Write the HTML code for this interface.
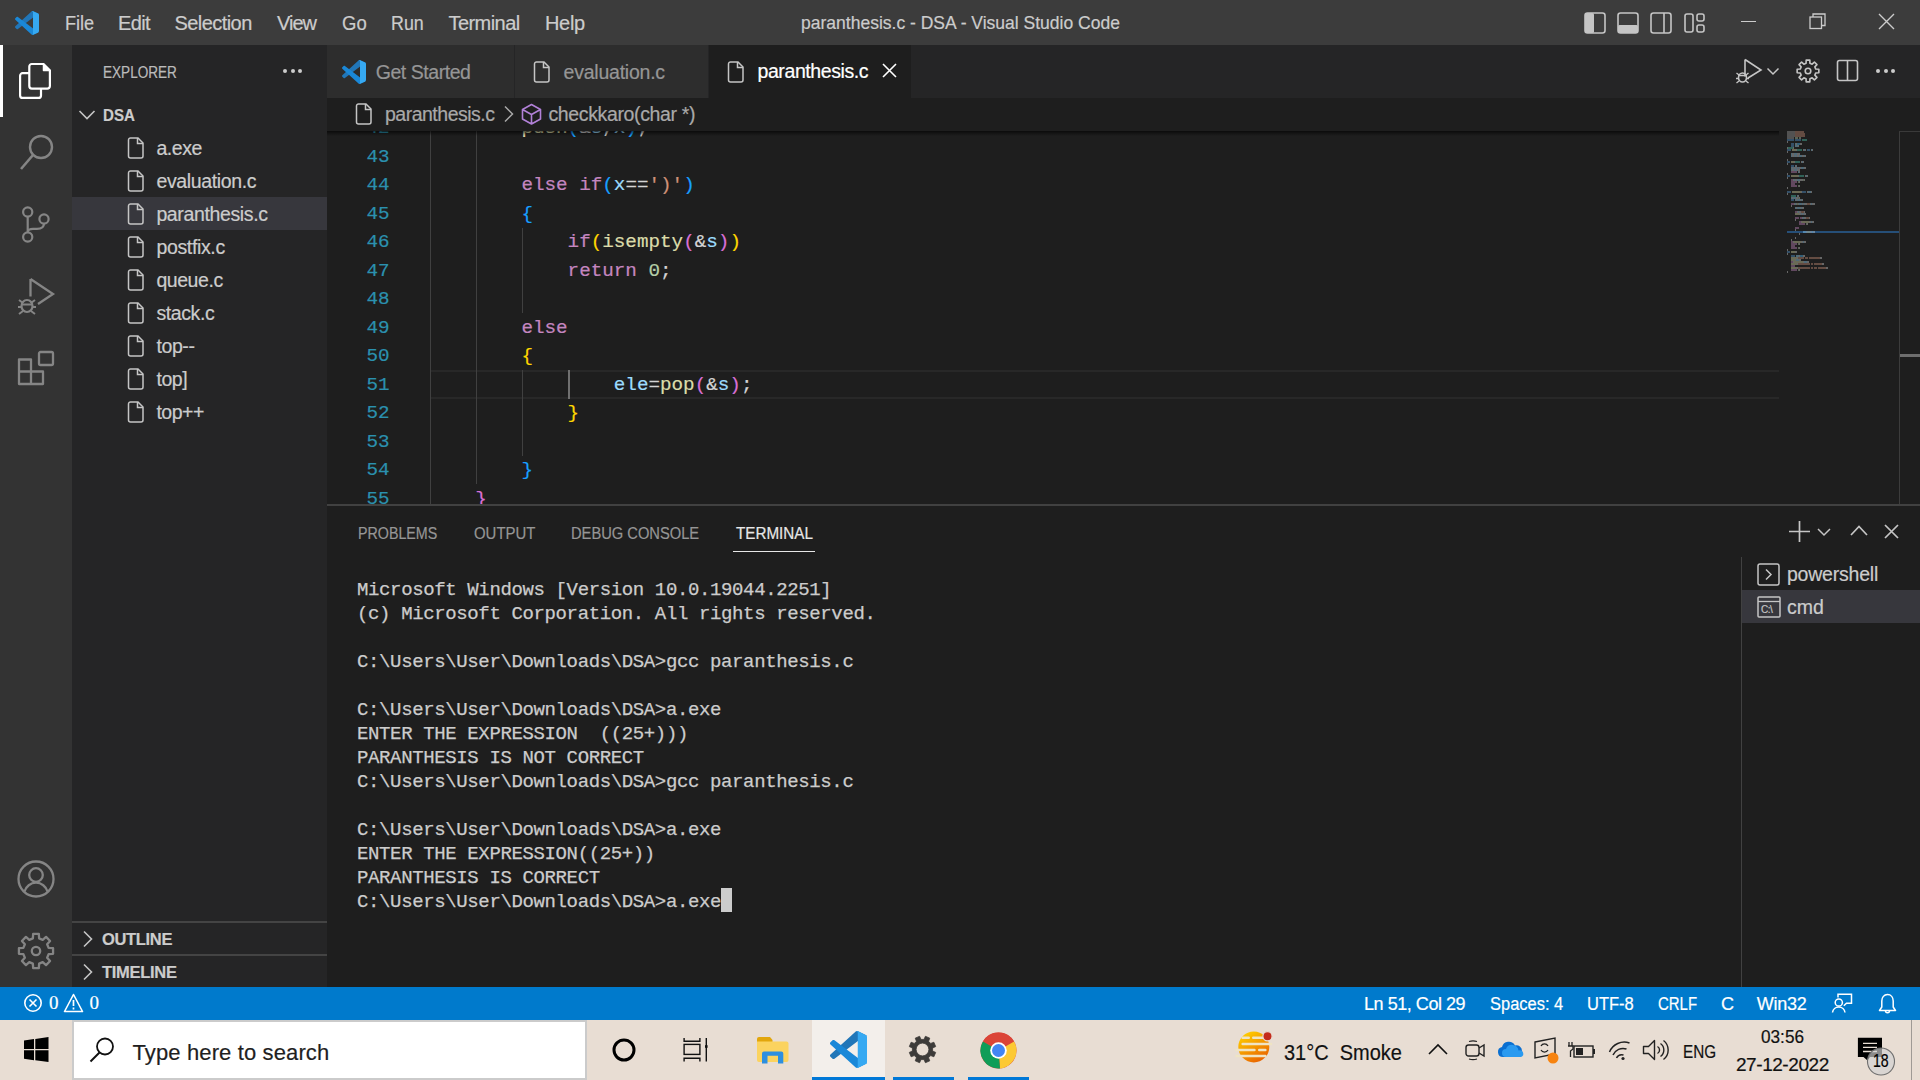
<!DOCTYPE html>
<html><head><meta charset="utf-8">
<style>
*{margin:0;padding:0;box-sizing:border-box}
html,body{width:1920px;height:1080px;overflow:hidden;background:#1e1e1e;font-family:"Liberation Sans",sans-serif}
.a{position:absolute}
.t{position:absolute;white-space:pre;line-height:1;-webkit-text-stroke-width:0.2px}
svg{position:absolute;overflow:visible}
</style></head><body>
<div class="a" style="left:0px;top:0px;width:1920px;height:45px;background:#3c3c3c;"></div>
<svg style="left:15px;top:11px;" width="24" height="24" viewBox="0 0 100 100"><path fill="#2176b8" d="M96.46 10.8L75.86.88C73.47-.27 70.62.21 68.75 2.08L1.3 63.58c-1.82 1.66-1.81 4.51.01 6.17l5.5 5.01c1.49 1.35 3.72 1.45 5.32.24L93.36 13.37C96.09 11.3 100 13.25 100 16.67v-.24c0-2.4-1.38-4.59-3.54-5.63z"/>
<path fill="#1a88d8" d="M96.46 89.2l-20.6 9.92c-2.39 1.15-5.24.67-7.11-1.2L1.3 36.42c-1.82-1.66-1.81-4.51.01-6.17l5.5-5.01c1.49-1.35 3.72-1.45 5.32-.24l81.23 61.62c2.73 2.07 6.64.12 6.64-3.3v.24c0 2.4-1.38 4.59-3.54 5.63z"/>
<path fill="#36a9f2" d="M75.86 99.13c-2.39 1.15-5.24.66-7.11-1.21 2.31 2.31 6.25.67 6.25-2.59V4.67c0-3.26-3.94-4.9-6.25-2.59 1.87-1.87 4.72-2.36 7.11-1.21l20.6 9.91c2.16 1.04 3.54 3.23 3.54 5.63v67.17c0 2.4-1.38 4.59-3.54 5.63l-20.6 9.92z"/></svg>
<div class="t" style="left:65.00px;top:13.07px;font-size:20px;color:#cccccc;font-family:'Liberation Sans',sans-serif;letter-spacing:0.000px;transform:scaleX(0.9062);transform-origin:0 0;">File</div>
<div class="t" style="left:118.00px;top:13.07px;font-size:20px;color:#cccccc;font-family:'Liberation Sans',sans-serif;letter-spacing:-0.667px;">Edit</div>
<div class="t" style="left:174.50px;top:13.07px;font-size:20px;color:#cccccc;font-family:'Liberation Sans',sans-serif;letter-spacing:-0.562px;">Selection</div>
<div class="t" style="left:277.00px;top:13.07px;font-size:20px;color:#cccccc;font-family:'Liberation Sans',sans-serif;letter-spacing:-1.000px;">View</div>
<div class="t" style="left:342.00px;top:13.07px;font-size:20px;color:#cccccc;font-family:'Liberation Sans',sans-serif;letter-spacing:0.000px;transform:scaleX(0.9259);transform-origin:0 0;">Go</div>
<div class="t" style="left:391.00px;top:13.07px;font-size:20px;color:#cccccc;font-family:'Liberation Sans',sans-serif;letter-spacing:0.000px;transform:scaleX(0.8919);transform-origin:0 0;">Run</div>
<div class="t" style="left:448.50px;top:13.07px;font-size:20px;color:#cccccc;font-family:'Liberation Sans',sans-serif;letter-spacing:-0.557px;">Terminal</div>
<div class="t" style="left:545.00px;top:13.07px;font-size:20px;color:#cccccc;font-family:'Liberation Sans',sans-serif;letter-spacing:-0.333px;">Help</div>
<div class="t" style="left:800.60px;top:12.91px;font-size:19px;color:#cccccc;font-family:'Liberation Sans',sans-serif;letter-spacing:0.000px;transform:scaleX(0.9217);transform-origin:0 0;">paranthesis.c - DSA - Visual Studio Code</div>
<svg style="left:1584px;top:12px;" width="22" height="22" viewBox="0 0 22 22"><rect x="1" y="1" width="20" height="20" rx="2.5" fill="none" stroke="#c5c5c5" stroke-width="1.6"/><rect x="1" y="1" width="9" height="20" rx="1.5" fill="#c5c5c5"/></svg>
<svg style="left:1617px;top:12px;" width="22" height="22" viewBox="0 0 22 22"><rect x="1" y="1" width="20" height="20" rx="2.5" fill="none" stroke="#c5c5c5" stroke-width="1.6"/><rect x="1" y="13" width="20" height="8" rx="1.5" fill="#c5c5c5"/></svg>
<svg style="left:1650px;top:12px;" width="22" height="22" viewBox="0 0 22 22"><rect x="1" y="1" width="20" height="20" rx="2.5" fill="none" stroke="#c5c5c5" stroke-width="1.6"/><line x1="14" y1="1" x2="14" y2="21" stroke="#c5c5c5" stroke-width="1.6"/></svg>
<svg style="left:1684px;top:13px;" width="21" height="21" viewBox="0 0 21 21"><rect x="1" y="1" width="8" height="18" rx="2" fill="none" stroke="#c5c5c5" stroke-width="1.6"/><rect x="13" y="1" width="7" height="7" rx="2" fill="none" stroke="#c5c5c5" stroke-width="1.6"/><rect x="13" y="12" width="7" height="7" rx="2" fill="none" stroke="#c5c5c5" stroke-width="1.6"/></svg>
<div class="a" style="left:1741px;top:21px;width:15px;height:1.2px;background:#cccccc;"></div>
<svg style="left:1809px;top:13px;" width="18" height="18" viewBox="0 0 18 18"><rect x="1" y="4" width="11.5" height="11.5" fill="none" stroke="#cccccc" stroke-width="1.3"/><path d="M4 4V1h12v11.5h-3.5" fill="none" stroke="#cccccc" stroke-width="1.3"/></svg>
<svg style="left:1878px;top:13px;" width="17" height="17" viewBox="0 0 17 17"><path d="M1 1L16 16M16 1L1 16" stroke="#cccccc" stroke-width="1.4"/></svg>
<div class="a" style="left:0px;top:45px;width:72px;height:942px;background:#333333;"></div>
<div class="a" style="left:0px;top:45px;width:3px;height:72px;background:#ffffff;"></div>
<svg style="left:18px;top:62px;" width="36" height="38" viewBox="0 0 36 38"><path d="M12 11.2H4.6A2.5 2.5 0 0 0 2.1 13.7V33.4A2.5 2.5 0 0 0 4.6 35.9H20.5A2.5 2.5 0 0 0 23 33.4V27" fill="none" stroke="#fff" stroke-width="2.2"/><path d="M13.8 2H25.5L31.9 8.4V24.1A2.5 2.5 0 0 1 29.4 26.6H13.8A2.5 2.5 0 0 1 11.3 24.1V4.5A2.5 2.5 0 0 1 13.8 2z" fill="none" stroke="#fff" stroke-width="2.2"/><path d="M25.5 2V8.4H31.9z" fill="#fff" stroke="#fff" stroke-width="1.5" stroke-linejoin="round"/></svg>
<svg style="left:18px;top:132px;" width="40" height="40" viewBox="0 0 40 40"><circle cx="23" cy="15" r="11" fill="none" stroke="#858585" stroke-width="2.4"/><line x1="15" y1="23" x2="3" y2="37" stroke="#858585" stroke-width="2.6"/></svg>
<svg style="left:18px;top:202px;" width="36" height="42" viewBox="0 0 36 42"><circle cx="9.7" cy="10" r="4.6" fill="none" stroke="#858585" stroke-width="2.2"/><circle cx="26" cy="17" r="4.6" fill="none" stroke="#858585" stroke-width="2.2"/><circle cx="9.7" cy="35" r="4.6" fill="none" stroke="#858585" stroke-width="2.2"/><path d="M9.7 14.6v15.8M26 21.6c0 4-3 5.3-7 5.3h-4c-3 0-5.3 1.2-5.3 3.5" fill="none" stroke="#858585" stroke-width="2.2"/></svg>
<svg style="left:16px;top:276px;" width="40" height="42" viewBox="0 0 40 42"><path d="M14.5 3v17.5M14.5 3L37 18 22 28" fill="none" stroke="#858585" stroke-width="2.3" stroke-linejoin="miter"/><ellipse cx="11" cy="30" rx="5.5" ry="6" fill="none" stroke="#858585" stroke-width="2.2"/><path d="M5.5 28.5h11M3 24l4 3M19 24l-4 3M2 31h3.5M16.5 31H20M3 38l4-3M19 38l-4-3" stroke="#858585" stroke-width="2"/></svg>
<svg style="left:16px;top:349px;" width="40" height="40" viewBox="0 0 40 40"><path d="M3 10.5h12v12h12v12.5H3z M3 22.5h12v12.5 M15 22.5V10.5" fill="none" stroke="#858585" stroke-width="2.3" stroke-linejoin="round"/><rect x="23" y="3" width="14" height="13" rx="1.5" fill="none" stroke="#858585" stroke-width="2.3"/></svg>
<svg style="left:17px;top:860px;" width="38" height="38" viewBox="0 0 38 38"><circle cx="19" cy="19" r="17.5" fill="none" stroke="#858585" stroke-width="2.3"/><circle cx="19" cy="15" r="6.8" fill="none" stroke="#858585" stroke-width="2.3"/><path d="M7.5 31.5c1.5-5 6-8.8 11.5-8.8s10 3.8 11.5 8.8" fill="none" stroke="#858585" stroke-width="2.3"/></svg>
<svg style="left:17px;top:932px;" width="38" height="38" viewBox="0 0 38 38"><path d="M31.62 15.87 L36.07 16.16 L36.07 21.84 L31.62 22.13 L30.14 25.71 L33.08 29.06 L29.06 33.08 L25.71 30.14 L22.13 31.62 L21.84 36.07 L16.16 36.07 L15.87 31.62 L12.29 30.14 L8.94 33.08 L4.92 29.06 L7.86 25.71 L6.38 22.13 L1.93 21.84 L1.93 16.16 L6.38 15.87 L7.86 12.29 L4.92 8.94 L8.94 4.92 L12.29 7.86 L15.87 6.38 L16.16 1.93 L21.84 1.93 L22.13 6.38 L25.71 7.86 L29.06 4.92 L33.08 8.94 L30.14 12.29Z" fill="none" stroke="#858585" stroke-width="2.3" stroke-linejoin="round"/><circle cx="19" cy="19" r="4.2" fill="none" stroke="#858585" stroke-width="2.3"/></svg>
<div class="a" style="left:72px;top:45px;width:255px;height:942px;background:#252526;"></div>
<div class="t" style="left:103.00px;top:64.03px;font-size:16.5px;color:#bbbbbb;font-family:'Liberation Sans',sans-serif;letter-spacing:0.000px;transform:scaleX(0.8222);transform-origin:0 0;">EXPLORER</div>
<div class="a" style="left:283.0px;top:69px;width:4px;height:4px;background:#cccccc;border-radius:2px"></div>
<div class="a" style="left:290.5px;top:69px;width:4px;height:4px;background:#cccccc;border-radius:2px"></div>
<div class="a" style="left:298.0px;top:69px;width:4px;height:4px;background:#cccccc;border-radius:2px"></div>
<svg style="left:78px;top:109px;" width="18" height="12" viewBox="0 0 18 12"><path d="M1.5 2l7.5 7.5L16.5 2" fill="none" stroke="#c5c5c5" stroke-width="1.6"/></svg>
<div class="t" style="left:103.00px;top:106.63px;font-size:16.5px;color:#cccccc;font-family:'Liberation Sans',sans-serif;font-weight:700;letter-spacing:0.000px;transform:scaleX(0.9143);transform-origin:0 0;">DSA</div>
<div class="a" style="left:72px;top:197px;width:255px;height:33px;background:#37373d;"></div>
<svg style="left:127px;top:137px;" width="18" height="22" viewBox="0 0 18 22"><path d="M1.5 3a2 2 0 0 1 2-2h7.5l5 5v13a2 2 0 0 1-2 2h-10.5a2 2 0 0 1-2-2z" fill="none" stroke="#c5c5c5" stroke-width="1.5"/><path d="M10.5 1v5.5h5.5" fill="none" stroke="#c5c5c5" stroke-width="1.5"/></svg>
<div class="t" style="left:156.40px;top:139.49px;font-size:19.5px;color:#cccccc;font-family:'Liberation Sans',sans-serif;letter-spacing:-0.456px;">a.exe</div>
<svg style="left:127px;top:170px;" width="18" height="22" viewBox="0 0 18 22"><path d="M1.5 3a2 2 0 0 1 2-2h7.5l5 5v13a2 2 0 0 1-2 2h-10.5a2 2 0 0 1-2-2z" fill="none" stroke="#c5c5c5" stroke-width="1.5"/><path d="M10.5 1v5.5h5.5" fill="none" stroke="#c5c5c5" stroke-width="1.5"/></svg>
<div class="t" style="left:156.40px;top:172.49px;font-size:19.5px;color:#cccccc;font-family:'Liberation Sans',sans-serif;letter-spacing:-0.359px;">evaluation.c</div>
<svg style="left:127px;top:203px;" width="18" height="22" viewBox="0 0 18 22"><path d="M1.5 3a2 2 0 0 1 2-2h7.5l5 5v13a2 2 0 0 1-2 2h-10.5a2 2 0 0 1-2-2z" fill="none" stroke="#c5c5c5" stroke-width="1.5"/><path d="M10.5 1v5.5h5.5" fill="none" stroke="#c5c5c5" stroke-width="1.5"/></svg>
<div class="t" style="left:156.40px;top:205.49px;font-size:19.5px;color:#cccccc;font-family:'Liberation Sans',sans-serif;letter-spacing:-0.367px;">paranthesis.c</div>
<svg style="left:127px;top:236px;" width="18" height="22" viewBox="0 0 18 22"><path d="M1.5 3a2 2 0 0 1 2-2h7.5l5 5v13a2 2 0 0 1-2 2h-10.5a2 2 0 0 1-2-2z" fill="none" stroke="#c5c5c5" stroke-width="1.5"/><path d="M10.5 1v5.5h5.5" fill="none" stroke="#c5c5c5" stroke-width="1.5"/></svg>
<div class="t" style="left:156.40px;top:238.49px;font-size:19.5px;color:#cccccc;font-family:'Liberation Sans',sans-serif;letter-spacing:-0.342px;">postfix.c</div>
<svg style="left:127px;top:269px;" width="18" height="22" viewBox="0 0 18 22"><path d="M1.5 3a2 2 0 0 1 2-2h7.5l5 5v13a2 2 0 0 1-2 2h-10.5a2 2 0 0 1-2-2z" fill="none" stroke="#c5c5c5" stroke-width="1.5"/><path d="M10.5 1v5.5h5.5" fill="none" stroke="#c5c5c5" stroke-width="1.5"/></svg>
<div class="t" style="left:156.40px;top:271.49px;font-size:19.5px;color:#cccccc;font-family:'Liberation Sans',sans-serif;letter-spacing:-0.443px;">queue.c</div>
<svg style="left:127px;top:302px;" width="18" height="22" viewBox="0 0 18 22"><path d="M1.5 3a2 2 0 0 1 2-2h7.5l5 5v13a2 2 0 0 1-2 2h-10.5a2 2 0 0 1-2-2z" fill="none" stroke="#c5c5c5" stroke-width="1.5"/><path d="M10.5 1v5.5h5.5" fill="none" stroke="#c5c5c5" stroke-width="1.5"/></svg>
<div class="t" style="left:156.40px;top:304.49px;font-size:19.5px;color:#cccccc;font-family:'Liberation Sans',sans-serif;letter-spacing:-0.386px;">stack.c</div>
<svg style="left:127px;top:335px;" width="18" height="22" viewBox="0 0 18 22"><path d="M1.5 3a2 2 0 0 1 2-2h7.5l5 5v13a2 2 0 0 1-2 2h-10.5a2 2 0 0 1-2-2z" fill="none" stroke="#c5c5c5" stroke-width="1.5"/><path d="M10.5 1v5.5h5.5" fill="none" stroke="#c5c5c5" stroke-width="1.5"/></svg>
<div class="t" style="left:156.40px;top:337.49px;font-size:19.5px;color:#cccccc;font-family:'Liberation Sans',sans-serif;letter-spacing:-0.380px;">top--</div>
<svg style="left:127px;top:368px;" width="18" height="22" viewBox="0 0 18 22"><path d="M1.5 3a2 2 0 0 1 2-2h7.5l5 5v13a2 2 0 0 1-2 2h-10.5a2 2 0 0 1-2-2z" fill="none" stroke="#c5c5c5" stroke-width="1.5"/><path d="M10.5 1v5.5h5.5" fill="none" stroke="#c5c5c5" stroke-width="1.5"/></svg>
<div class="t" style="left:156.40px;top:370.49px;font-size:19.5px;color:#cccccc;font-family:'Liberation Sans',sans-serif;letter-spacing:-0.418px;">top]</div>
<svg style="left:127px;top:401px;" width="18" height="22" viewBox="0 0 18 22"><path d="M1.5 3a2 2 0 0 1 2-2h7.5l5 5v13a2 2 0 0 1-2 2h-10.5a2 2 0 0 1-2-2z" fill="none" stroke="#c5c5c5" stroke-width="1.5"/><path d="M10.5 1v5.5h5.5" fill="none" stroke="#c5c5c5" stroke-width="1.5"/></svg>
<div class="t" style="left:156.40px;top:403.49px;font-size:19.5px;color:#cccccc;font-family:'Liberation Sans',sans-serif;letter-spacing:-0.475px;">top++</div>
<div class="a" style="left:72px;top:921px;width:255px;height:1.5px;background:#444444;"></div>
<div class="a" style="left:72px;top:954px;width:255px;height:1.5px;background:#444444;"></div>
<svg style="left:82px;top:930px;" width="12" height="18" viewBox="0 0 12 18"><path d="M2 1.5l7.5 7.5L2 16.5" fill="none" stroke="#c5c5c5" stroke-width="1.6"/></svg>
<div class="t" style="left:102.00px;top:931.03px;font-size:16.5px;color:#cccccc;font-family:'Liberation Sans',sans-serif;font-weight:700;letter-spacing:-0.333px;">OUTLINE</div>
<svg style="left:82px;top:963px;" width="12" height="18" viewBox="0 0 12 18"><path d="M2 1.5l7.5 7.5L2 16.5" fill="none" stroke="#c5c5c5" stroke-width="1.6"/></svg>
<div class="t" style="left:102.00px;top:964.03px;font-size:16.5px;color:#cccccc;font-family:'Liberation Sans',sans-serif;font-weight:700;letter-spacing:-0.286px;">TIMELINE</div>
<div class="a" style="left:327px;top:45px;width:1593px;height:53px;background:#252526;"></div>
<div class="a" style="left:327px;top:45px;width:187px;height:53px;background:#2d2d2d;"></div>
<div class="a" style="left:515px;top:45px;width:193px;height:53px;background:#2d2d2d;"></div>
<div class="a" style="left:709px;top:45px;width:202px;height:53px;background:#1e1e1e;"></div>
<svg style="left:342px;top:60px;" width="24" height="24" viewBox="0 0 100 100"><path fill="#2176b8" d="M96.46 10.8L75.86.88C73.47-.27 70.62.21 68.75 2.08L1.3 63.58c-1.82 1.66-1.81 4.51.01 6.17l5.5 5.01c1.49 1.35 3.72 1.45 5.32.24L93.36 13.37C96.09 11.3 100 13.25 100 16.67v-.24c0-2.4-1.38-4.59-3.54-5.63z"/>
<path fill="#1a88d8" d="M96.46 89.2l-20.6 9.92c-2.39 1.15-5.24.67-7.11-1.2L1.3 36.42c-1.82-1.66-1.81-4.51.01-6.17l5.5-5.01c1.49-1.35 3.72-1.45 5.32-.24l81.23 61.62c2.73 2.07 6.64.12 6.64-3.3v.24c0 2.4-1.38 4.59-3.54 5.63z"/>
<path fill="#36a9f2" d="M75.86 99.13c-2.39 1.15-5.24.66-7.11-1.21 2.31 2.31 6.25.67 6.25-2.59V4.67c0-3.26-3.94-4.9-6.25-2.59 1.87-1.87 4.72-2.36 7.11-1.21l20.6 9.91c2.16 1.04 3.54 3.23 3.54 5.63v67.17c0 2.4-1.38 4.59-3.54 5.63l-20.6 9.92z"/></svg>
<div class="t" style="left:375.75px;top:62.79px;font-size:19.5px;color:#969696;font-family:'Liberation Sans',sans-serif;letter-spacing:-0.455px;">Get Started</div>
<svg style="left:533px;top:61px;" width="18" height="22" viewBox="0 0 18 22"><path d="M1.5 3a2 2 0 0 1 2-2h7.5l5 5v13a2 2 0 0 1-2 2h-10.5a2 2 0 0 1-2-2z" fill="none" stroke="#c5c5c5" stroke-width="1.5"/><path d="M10.5 1v5.5h5.5" fill="none" stroke="#c5c5c5" stroke-width="1.5"/></svg>
<div class="t" style="left:563.60px;top:62.79px;font-size:19.5px;color:#969696;font-family:'Liberation Sans',sans-serif;letter-spacing:-0.236px;">evaluation.c</div>
<svg style="left:727px;top:61px;" width="18" height="22" viewBox="0 0 18 22"><path d="M1.5 3a2 2 0 0 1 2-2h7.5l5 5v13a2 2 0 0 1-2 2h-10.5a2 2 0 0 1-2-2z" fill="none" stroke="#c5c5c5" stroke-width="1.5"/><path d="M10.5 1v5.5h5.5" fill="none" stroke="#c5c5c5" stroke-width="1.5"/></svg>
<div class="t" style="left:757.50px;top:62.49px;font-size:19.5px;color:#ffffff;font-family:'Liberation Sans',sans-serif;letter-spacing:-0.408px;">paranthesis.c</div>
<svg style="left:882px;top:63px;" width="15" height="15" viewBox="0 0 15 15"><path d="M1 1L14 14M14 1L1 14" stroke="#ffffff" stroke-width="1.6"/></svg>
<svg style="left:1735px;top:58px;" width="48" height="28" viewBox="0 0 48 28"><path d="M10 1.5v17M10 1.5L26 12 13 20" fill="none" stroke="#c5c5c5" stroke-width="1.6"/><ellipse cx="7.5" cy="19.5" rx="4" ry="4.5" fill="none" stroke="#c5c5c5" stroke-width="1.6"/><path d="M3.5 17.5h8M1.5 15l2.5 2M13.5 15l-2.5 2M1 20.5h2.5M11.5 20.5H14M1.5 25l2.5-2M13.5 25l-2.5-2" stroke="#c5c5c5" stroke-width="1.4"/><path d="M32.5 10.5l5.5 5.5 5.5-5.5" fill="none" stroke="#c5c5c5" stroke-width="1.5"/></svg>
<svg style="left:1796px;top:59px;" width="24" height="24" viewBox="0 0 24 24"><path d="M19.76 10.07 L22.85 10.19 L22.85 13.81 L19.76 13.93 L18.85 16.13 L20.95 18.40 L18.40 20.95 L16.13 18.85 L13.93 19.76 L13.81 22.85 L10.19 22.85 L10.07 19.76 L7.87 18.85 L5.60 20.95 L3.05 18.40 L5.15 16.13 L4.24 13.93 L1.15 13.81 L1.15 10.19 L4.24 10.07 L5.15 7.87 L3.05 5.60 L5.60 3.05 L7.87 5.15 L10.07 4.24 L10.19 1.15 L13.81 1.15 L13.93 4.24 L16.13 5.15 L18.40 3.05 L20.95 5.60 L18.85 7.87Z" fill="none" stroke="#c5c5c5" stroke-width="1.6" stroke-linejoin="round"/><circle cx="12" cy="12" r="2.8" fill="none" stroke="#c5c5c5" stroke-width="1.6"/></svg>
<svg style="left:1836px;top:59px;" width="23" height="23" viewBox="0 0 23 23"><rect x="1.5" y="1.5" width="20" height="20" rx="2" fill="none" stroke="#c5c5c5" stroke-width="1.6"/><line x1="11.5" y1="1.5" x2="11.5" y2="21.5" stroke="#c5c5c5" stroke-width="1.6"/></svg>
<div class="a" style="left:1876.0px;top:69px;width:4px;height:4px;background:#cccccc;border-radius:2px"></div>
<div class="a" style="left:1883.5px;top:69px;width:4px;height:4px;background:#cccccc;border-radius:2px"></div>
<div class="a" style="left:1891.0px;top:69px;width:4px;height:4px;background:#cccccc;border-radius:2px"></div>
<div class="a" style="left:327px;top:98px;width:1593px;height:33px;background:#1e1e1e;"></div>
<svg style="left:355px;top:103px;" width="18" height="22" viewBox="0 0 18 22"><path d="M1.5 3a2 2 0 0 1 2-2h7.5l5 5v13a2 2 0 0 1-2 2h-10.5a2 2 0 0 1-2-2z" fill="none" stroke="#c5c5c5" stroke-width="1.5"/><path d="M10.5 1v5.5h5.5" fill="none" stroke="#c5c5c5" stroke-width="1.5"/></svg>
<div class="t" style="left:385.00px;top:104.69px;font-size:19.5px;color:#a9a9a9;font-family:'Liberation Sans',sans-serif;letter-spacing:-0.500px;">paranthesis.c</div>
<svg style="left:503px;top:105px;" width="12" height="18" viewBox="0 0 12 18"><path d="M2 1.5l7.5 7.5L2 16.5" fill="none" stroke="#a9a9a9" stroke-width="1.5"/></svg>
<svg style="left:521px;top:103px;" width="21" height="22" viewBox="0 0 21 22"><path d="M10.5 1.5L19.5 6.5v9.5l-9 5-9-5V6.5z M1.5 6.5l9 5 9-5 M10.5 11.5v9.5" fill="none" stroke="#b180d7" stroke-width="1.6" stroke-linejoin="round"/></svg>
<div class="t" style="left:548.40px;top:104.69px;font-size:19.5px;color:#a9a9a9;font-family:'Liberation Sans',sans-serif;letter-spacing:-0.356px;">checkkaro(char *)</div>
<div class="a" style="left:327px;top:131px;width:1593px;height:373px;overflow:hidden;background:#1e1e1e">
<div class="a" style="left:103px;top:239.0px;width:1349px;height:28.5px;border-top:2px solid #282828;border-bottom:2px solid #282828"></div>
<div class="a" style="left:102.50px;top:-46.00px;width:1.5px;height:456.00px;background:#404040"></div>
<div class="a" style="left:148.70px;top:-46.00px;width:1.5px;height:399.00px;background:#404040"></div>
<div class="a" style="left:194.90px;top:96.50px;width:1.5px;height:85.50px;background:#404040"></div>
<div class="a" style="left:194.90px;top:239.00px;width:1.5px;height:85.50px;background:#404040"></div>
<div class="a" style="left:241.10px;top:239.00px;width:1.5px;height:28.50px;background:#707070"></div>
<div class="t" style="left:39.40px;top:-11.56px;font-family:'Liberation Mono',monospace;font-size:19.25px;color:#2b91af">42</div>
<div class="t" style="left:194.40px;top:-11.56px;font-family:'Liberation Mono',monospace;font-size:19.25px"><span style="color:#DCDCAA">push</span><span style="color:#179FFF">(</span><span style="color:#D4D4D4">&amp;</span><span style="color:#9CDCFE">s</span><span style="color:#D4D4D4">,</span><span style="color:#9CDCFE">x</span><span style="color:#179FFF">)</span><span style="color:#D4D4D4">;</span></div>
<div class="t" style="left:39.40px;top:16.94px;font-family:'Liberation Mono',monospace;font-size:19.25px;color:#2b91af">43</div>
<div class="t" style="left:39.40px;top:45.44px;font-family:'Liberation Mono',monospace;font-size:19.25px;color:#2b91af">44</div>
<div class="t" style="left:194.40px;top:45.44px;font-family:'Liberation Mono',monospace;font-size:19.25px"><span style="color:#C586C0">else</span><span style="color:#D4D4D4"> </span><span style="color:#C586C0">if</span><span style="color:#179FFF">(</span><span style="color:#9CDCFE">x</span><span style="color:#D4D4D4">==</span><span style="color:#CE9178">')'</span><span style="color:#179FFF">)</span></div>
<div class="t" style="left:39.40px;top:73.94px;font-family:'Liberation Mono',monospace;font-size:19.25px;color:#2b91af">45</div>
<div class="t" style="left:194.40px;top:73.94px;font-family:'Liberation Mono',monospace;font-size:19.25px"><span style="color:#179FFF">{</span></div>
<div class="t" style="left:39.40px;top:102.44px;font-family:'Liberation Mono',monospace;font-size:19.25px;color:#2b91af">46</div>
<div class="t" style="left:240.60px;top:102.44px;font-family:'Liberation Mono',monospace;font-size:19.25px"><span style="color:#C586C0">if</span><span style="color:#FFD700">(</span><span style="color:#DCDCAA">isempty</span><span style="color:#DA70D6">(</span><span style="color:#D4D4D4">&amp;</span><span style="color:#9CDCFE">s</span><span style="color:#DA70D6">)</span><span style="color:#FFD700">)</span></div>
<div class="t" style="left:39.40px;top:130.94px;font-family:'Liberation Mono',monospace;font-size:19.25px;color:#2b91af">47</div>
<div class="t" style="left:240.60px;top:130.94px;font-family:'Liberation Mono',monospace;font-size:19.25px"><span style="color:#C586C0">return</span><span style="color:#D4D4D4"> </span><span style="color:#B5CEA8">0</span><span style="color:#D4D4D4">;</span></div>
<div class="t" style="left:39.40px;top:159.44px;font-family:'Liberation Mono',monospace;font-size:19.25px;color:#2b91af">48</div>
<div class="t" style="left:39.40px;top:187.94px;font-family:'Liberation Mono',monospace;font-size:19.25px;color:#2b91af">49</div>
<div class="t" style="left:194.40px;top:187.94px;font-family:'Liberation Mono',monospace;font-size:19.25px"><span style="color:#C586C0">else</span></div>
<div class="t" style="left:39.40px;top:216.44px;font-family:'Liberation Mono',monospace;font-size:19.25px;color:#2b91af">50</div>
<div class="t" style="left:194.40px;top:216.44px;font-family:'Liberation Mono',monospace;font-size:19.25px"><span style="color:#FFD700">{</span></div>
<div class="t" style="left:39.40px;top:244.94px;font-family:'Liberation Mono',monospace;font-size:19.25px;color:#2b91af">51</div>
<div class="t" style="left:286.80px;top:244.94px;font-family:'Liberation Mono',monospace;font-size:19.25px"><span style="color:#9CDCFE">ele</span><span style="color:#D4D4D4">=</span><span style="color:#DCDCAA">pop</span><span style="color:#DA70D6">(</span><span style="color:#D4D4D4">&amp;</span><span style="color:#9CDCFE">s</span><span style="color:#DA70D6">)</span><span style="color:#D4D4D4">;</span></div>
<div class="t" style="left:39.40px;top:273.44px;font-family:'Liberation Mono',monospace;font-size:19.25px;color:#2b91af">52</div>
<div class="t" style="left:240.60px;top:273.44px;font-family:'Liberation Mono',monospace;font-size:19.25px"><span style="color:#FFD700">}</span></div>
<div class="t" style="left:39.40px;top:301.94px;font-family:'Liberation Mono',monospace;font-size:19.25px;color:#2b91af">53</div>
<div class="t" style="left:39.40px;top:330.44px;font-family:'Liberation Mono',monospace;font-size:19.25px;color:#2b91af">54</div>
<div class="t" style="left:194.40px;top:330.44px;font-family:'Liberation Mono',monospace;font-size:19.25px"><span style="color:#179FFF">}</span></div>
<div class="t" style="left:39.40px;top:358.94px;font-family:'Liberation Mono',monospace;font-size:19.25px;color:#2b91af">55</div>
<div class="t" style="left:148.20px;top:358.94px;font-family:'Liberation Mono',monospace;font-size:19.25px"><span style="color:#DA70D6">}</span></div>
</div>
<div class="a" style="left:327px;top:131px;width:1452px;height:5px;background:linear-gradient(#000000a0,#00000000)"></div>
<div class="a" style="left:1787px;top:231px;width:112px;height:2.2px;background:#264f78;"></div>
<div class="a" style="left:1787px;top:131px;width:8px;height:1.5px;background:#a0a0a0;opacity:0.4"></div>
<div class="a" style="left:1795px;top:131px;width:9px;height:1.5px;background:#CE9178;opacity:0.4"></div>
<div class="a" style="left:1787px;top:133px;width:8px;height:1.5px;background:#a0a0a0;opacity:0.4"></div>
<div class="a" style="left:1795px;top:133px;width:10px;height:1.5px;background:#CE9178;opacity:0.4"></div>
<div class="a" style="left:1787px;top:135px;width:8px;height:1.5px;background:#a0a0a0;opacity:0.4"></div>
<div class="a" style="left:1795px;top:135px;width:10px;height:1.5px;background:#CE9178;opacity:0.4"></div>
<div class="a" style="left:1787px;top:137px;width:7px;height:1.5px;background:#a0a0a0;opacity:0.4"></div>
<div class="a" style="left:1795px;top:137px;width:3px;height:1.5px;background:#B5CEA8;opacity:0.4"></div>
<div class="a" style="left:1799px;top:137px;width:2px;height:1.5px;background:#B5CEA8;opacity:0.4"></div>
<div class="a" style="left:1787px;top:139px;width:7px;height:1.5px;background:#569CD6;opacity:0.4"></div>
<div class="a" style="left:1795px;top:139px;width:6px;height:1.5px;background:#569CD6;opacity:0.4"></div>
<div class="a" style="left:1802px;top:139px;width:5px;height:1.5px;background:#4EC9B0;opacity:0.4"></div>
<div class="a" style="left:1787px;top:141px;width:1px;height:1.5px;background:#D4D4D4;opacity:0.4"></div>
<div class="a" style="left:1791px;top:143px;width:3px;height:1.5px;background:#569CD6;opacity:0.4"></div>
<div class="a" style="left:1795px;top:143px;width:1px;height:1.5px;background:#9CDCFE;opacity:0.4"></div>
<div class="a" style="left:1796px;top:143px;width:1px;height:1.5px;background:#D4D4D4;opacity:0.4"></div>
<div class="a" style="left:1797px;top:143px;width:3px;height:1.5px;background:#4FC1FF;opacity:0.4"></div>
<div class="a" style="left:1800px;top:143px;width:1px;height:1.5px;background:#D4D4D4;opacity:0.4"></div>
<div class="a" style="left:1801px;top:143px;width:1px;height:1.5px;background:#D4D4D4;opacity:0.4"></div>
<div class="a" style="left:1791px;top:145px;width:3px;height:1.5px;background:#569CD6;opacity:0.4"></div>
<div class="a" style="left:1795px;top:145px;width:3px;height:1.5px;background:#9CDCFE;opacity:0.4"></div>
<div class="a" style="left:1798px;top:145px;width:1px;height:1.5px;background:#D4D4D4;opacity:0.4"></div>
<div class="a" style="left:1787px;top:147px;width:1px;height:1.5px;background:#D4D4D4;opacity:0.4"></div>
<div class="a" style="left:1788px;top:147px;width:5px;height:1.5px;background:#4EC9B0;opacity:0.4"></div>
<div class="a" style="left:1793px;top:147px;width:1px;height:1.5px;background:#D4D4D4;opacity:0.4"></div>
<div class="a" style="left:1787px;top:149px;width:4px;height:1.5px;background:#569CD6;opacity:0.4"></div>
<div class="a" style="left:1792px;top:149px;width:4px;height:1.5px;background:#DCDCAA;opacity:0.4"></div>
<div class="a" style="left:1796px;top:149px;width:1px;height:1.5px;background:#D4D4D4;opacity:0.4"></div>
<div class="a" style="left:1797px;top:149px;width:5px;height:1.5px;background:#4EC9B0;opacity:0.4"></div>
<div class="a" style="left:1803px;top:149px;width:1px;height:1.5px;background:#D4D4D4;opacity:0.4"></div>
<div class="a" style="left:1804px;top:149px;width:1px;height:1.5px;background:#9CDCFE;opacity:0.4"></div>
<div class="a" style="left:1805px;top:149px;width:1px;height:1.5px;background:#D4D4D4;opacity:0.4"></div>
<div class="a" style="left:1807px;top:149px;width:3px;height:1.5px;background:#569CD6;opacity:0.4"></div>
<div class="a" style="left:1811px;top:149px;width:1px;height:1.5px;background:#9CDCFE;opacity:0.4"></div>
<div class="a" style="left:1812px;top:149px;width:1px;height:1.5px;background:#D4D4D4;opacity:0.4"></div>
<div class="a" style="left:1787px;top:151px;width:1px;height:1.5px;background:#D4D4D4;opacity:0.4"></div>
<div class="a" style="left:1791px;top:153px;width:1px;height:1.5px;background:#9CDCFE;opacity:0.4"></div>
<div class="a" style="left:1792px;top:153px;width:1px;height:1.5px;background:#D4D4D4;opacity:0.4"></div>
<div class="a" style="left:1793px;top:153px;width:1px;height:1.5px;background:#D4D4D4;opacity:0.4"></div>
<div class="a" style="left:1794px;top:153px;width:3px;height:1.5px;background:#9CDCFE;opacity:0.4"></div>
<div class="a" style="left:1797px;top:153px;width:1px;height:1.5px;background:#D4D4D4;opacity:0.4"></div>
<div class="a" style="left:1798px;top:153px;width:1px;height:1.5px;background:#D4D4D4;opacity:0.4"></div>
<div class="a" style="left:1799px;top:153px;width:1px;height:1.5px;background:#D4D4D4;opacity:0.4"></div>
<div class="a" style="left:1791px;top:155px;width:1px;height:1.5px;background:#9CDCFE;opacity:0.4"></div>
<div class="a" style="left:1792px;top:155px;width:1px;height:1.5px;background:#D4D4D4;opacity:0.4"></div>
<div class="a" style="left:1793px;top:155px;width:1px;height:1.5px;background:#D4D4D4;opacity:0.4"></div>
<div class="a" style="left:1794px;top:155px;width:1px;height:1.5px;background:#9CDCFE;opacity:0.4"></div>
<div class="a" style="left:1795px;top:155px;width:1px;height:1.5px;background:#D4D4D4;opacity:0.4"></div>
<div class="a" style="left:1796px;top:155px;width:1px;height:1.5px;background:#9CDCFE;opacity:0.4"></div>
<div class="a" style="left:1797px;top:155px;width:1px;height:1.5px;background:#D4D4D4;opacity:0.4"></div>
<div class="a" style="left:1798px;top:155px;width:1px;height:1.5px;background:#D4D4D4;opacity:0.4"></div>
<div class="a" style="left:1799px;top:155px;width:3px;height:1.5px;background:#9CDCFE;opacity:0.4"></div>
<div class="a" style="left:1802px;top:155px;width:1px;height:1.5px;background:#D4D4D4;opacity:0.4"></div>
<div class="a" style="left:1803px;top:155px;width:1px;height:1.5px;background:#D4D4D4;opacity:0.4"></div>
<div class="a" style="left:1804px;top:155px;width:1px;height:1.5px;background:#9CDCFE;opacity:0.4"></div>
<div class="a" style="left:1805px;top:155px;width:1px;height:1.5px;background:#D4D4D4;opacity:0.4"></div>
<div class="a" style="left:1787px;top:159px;width:1px;height:1.5px;background:#D4D4D4;opacity:0.4"></div>
<div class="a" style="left:1787px;top:161px;width:3px;height:1.5px;background:#569CD6;opacity:0.4"></div>
<div class="a" style="left:1791px;top:161px;width:3px;height:1.5px;background:#DCDCAA;opacity:0.4"></div>
<div class="a" style="left:1794px;top:161px;width:1px;height:1.5px;background:#D4D4D4;opacity:0.4"></div>
<div class="a" style="left:1795px;top:161px;width:5px;height:1.5px;background:#4EC9B0;opacity:0.4"></div>
<div class="a" style="left:1801px;top:161px;width:1px;height:1.5px;background:#D4D4D4;opacity:0.4"></div>
<div class="a" style="left:1802px;top:161px;width:1px;height:1.5px;background:#9CDCFE;opacity:0.4"></div>
<div class="a" style="left:1803px;top:161px;width:1px;height:1.5px;background:#D4D4D4;opacity:0.4"></div>
<div class="a" style="left:1787px;top:163px;width:1px;height:1.5px;background:#D4D4D4;opacity:0.4"></div>
<div class="a" style="left:1791px;top:165px;width:3px;height:1.5px;background:#569CD6;opacity:0.4"></div>
<div class="a" style="left:1795px;top:165px;width:1px;height:1.5px;background:#9CDCFE;opacity:0.4"></div>
<div class="a" style="left:1796px;top:165px;width:1px;height:1.5px;background:#D4D4D4;opacity:0.4"></div>
<div class="a" style="left:1791px;top:167px;width:1px;height:1.5px;background:#9CDCFE;opacity:0.4"></div>
<div class="a" style="left:1792px;top:167px;width:1px;height:1.5px;background:#D4D4D4;opacity:0.4"></div>
<div class="a" style="left:1793px;top:167px;width:1px;height:1.5px;background:#9CDCFE;opacity:0.4"></div>
<div class="a" style="left:1794px;top:167px;width:1px;height:1.5px;background:#D4D4D4;opacity:0.4"></div>
<div class="a" style="left:1795px;top:167px;width:1px;height:1.5px;background:#D4D4D4;opacity:0.4"></div>
<div class="a" style="left:1796px;top:167px;width:1px;height:1.5px;background:#9CDCFE;opacity:0.4"></div>
<div class="a" style="left:1797px;top:167px;width:1px;height:1.5px;background:#D4D4D4;opacity:0.4"></div>
<div class="a" style="left:1798px;top:167px;width:1px;height:1.5px;background:#9CDCFE;opacity:0.4"></div>
<div class="a" style="left:1799px;top:167px;width:1px;height:1.5px;background:#D4D4D4;opacity:0.4"></div>
<div class="a" style="left:1800px;top:167px;width:1px;height:1.5px;background:#D4D4D4;opacity:0.4"></div>
<div class="a" style="left:1801px;top:167px;width:3px;height:1.5px;background:#9CDCFE;opacity:0.4"></div>
<div class="a" style="left:1804px;top:167px;width:1px;height:1.5px;background:#D4D4D4;opacity:0.4"></div>
<div class="a" style="left:1805px;top:167px;width:1px;height:1.5px;background:#D4D4D4;opacity:0.4"></div>
<div class="a" style="left:1791px;top:169px;width:1px;height:1.5px;background:#9CDCFE;opacity:0.4"></div>
<div class="a" style="left:1792px;top:169px;width:1px;height:1.5px;background:#D4D4D4;opacity:0.4"></div>
<div class="a" style="left:1793px;top:169px;width:1px;height:1.5px;background:#D4D4D4;opacity:0.4"></div>
<div class="a" style="left:1794px;top:169px;width:3px;height:1.5px;background:#9CDCFE;opacity:0.4"></div>
<div class="a" style="left:1797px;top:169px;width:1px;height:1.5px;background:#D4D4D4;opacity:0.4"></div>
<div class="a" style="left:1798px;top:169px;width:1px;height:1.5px;background:#D4D4D4;opacity:0.4"></div>
<div class="a" style="left:1799px;top:169px;width:1px;height:1.5px;background:#D4D4D4;opacity:0.4"></div>
<div class="a" style="left:1791px;top:171px;width:6px;height:1.5px;background:#C586C0;opacity:0.4"></div>
<div class="a" style="left:1798px;top:171px;width:1px;height:1.5px;background:#9CDCFE;opacity:0.4"></div>
<div class="a" style="left:1799px;top:171px;width:1px;height:1.5px;background:#D4D4D4;opacity:0.4"></div>
<div class="a" style="left:1787px;top:173px;width:1px;height:1.5px;background:#D4D4D4;opacity:0.4"></div>
<div class="a" style="left:1787px;top:175px;width:3px;height:1.5px;background:#569CD6;opacity:0.4"></div>
<div class="a" style="left:1791px;top:175px;width:7px;height:1.5px;background:#DCDCAA;opacity:0.4"></div>
<div class="a" style="left:1798px;top:175px;width:1px;height:1.5px;background:#D4D4D4;opacity:0.4"></div>
<div class="a" style="left:1799px;top:175px;width:5px;height:1.5px;background:#4EC9B0;opacity:0.4"></div>
<div class="a" style="left:1805px;top:175px;width:1px;height:1.5px;background:#D4D4D4;opacity:0.4"></div>
<div class="a" style="left:1806px;top:175px;width:1px;height:1.5px;background:#9CDCFE;opacity:0.4"></div>
<div class="a" style="left:1807px;top:175px;width:1px;height:1.5px;background:#D4D4D4;opacity:0.4"></div>
<div class="a" style="left:1787px;top:177px;width:1px;height:1.5px;background:#D4D4D4;opacity:0.4"></div>
<div class="a" style="left:1791px;top:179px;width:2px;height:1.5px;background:#C586C0;opacity:0.4"></div>
<div class="a" style="left:1793px;top:179px;width:1px;height:1.5px;background:#D4D4D4;opacity:0.4"></div>
<div class="a" style="left:1794px;top:179px;width:1px;height:1.5px;background:#9CDCFE;opacity:0.4"></div>
<div class="a" style="left:1795px;top:179px;width:1px;height:1.5px;background:#D4D4D4;opacity:0.4"></div>
<div class="a" style="left:1796px;top:179px;width:1px;height:1.5px;background:#D4D4D4;opacity:0.4"></div>
<div class="a" style="left:1797px;top:179px;width:3px;height:1.5px;background:#9CDCFE;opacity:0.4"></div>
<div class="a" style="left:1800px;top:179px;width:1px;height:1.5px;background:#D4D4D4;opacity:0.4"></div>
<div class="a" style="left:1801px;top:179px;width:1px;height:1.5px;background:#D4D4D4;opacity:0.4"></div>
<div class="a" style="left:1802px;top:179px;width:1px;height:1.5px;background:#D4D4D4;opacity:0.4"></div>
<div class="a" style="left:1803px;top:179px;width:1px;height:1.5px;background:#B5CEA8;opacity:0.4"></div>
<div class="a" style="left:1804px;top:179px;width:1px;height:1.5px;background:#D4D4D4;opacity:0.4"></div>
<div class="a" style="left:1791px;top:181px;width:6px;height:1.5px;background:#C586C0;opacity:0.4"></div>
<div class="a" style="left:1798px;top:181px;width:1px;height:1.5px;background:#B5CEA8;opacity:0.4"></div>
<div class="a" style="left:1799px;top:181px;width:1px;height:1.5px;background:#D4D4D4;opacity:0.4"></div>
<div class="a" style="left:1791px;top:183px;width:4px;height:1.5px;background:#C586C0;opacity:0.4"></div>
<div class="a" style="left:1791px;top:185px;width:6px;height:1.5px;background:#C586C0;opacity:0.4"></div>
<div class="a" style="left:1798px;top:185px;width:1px;height:1.5px;background:#B5CEA8;opacity:0.4"></div>
<div class="a" style="left:1799px;top:185px;width:1px;height:1.5px;background:#D4D4D4;opacity:0.4"></div>
<div class="a" style="left:1787px;top:187px;width:1px;height:1.5px;background:#D4D4D4;opacity:0.4"></div>
<div class="a" style="left:1787px;top:191px;width:4px;height:1.5px;background:#569CD6;opacity:0.4"></div>
<div class="a" style="left:1792px;top:191px;width:9px;height:1.5px;background:#DCDCAA;opacity:0.4"></div>
<div class="a" style="left:1801px;top:191px;width:1px;height:1.5px;background:#D4D4D4;opacity:0.4"></div>
<div class="a" style="left:1802px;top:191px;width:4px;height:1.5px;background:#569CD6;opacity:0.4"></div>
<div class="a" style="left:1807px;top:191px;width:1px;height:1.5px;background:#D4D4D4;opacity:0.4"></div>
<div class="a" style="left:1808px;top:191px;width:3px;height:1.5px;background:#9CDCFE;opacity:0.4"></div>
<div class="a" style="left:1811px;top:191px;width:1px;height:1.5px;background:#D4D4D4;opacity:0.4"></div>
<div class="a" style="left:1787px;top:193px;width:1px;height:1.5px;background:#D4D4D4;opacity:0.4"></div>
<div class="a" style="left:1791px;top:195px;width:5px;height:1.5px;background:#4EC9B0;opacity:0.4"></div>
<div class="a" style="left:1797px;top:195px;width:1px;height:1.5px;background:#9CDCFE;opacity:0.4"></div>
<div class="a" style="left:1798px;top:195px;width:1px;height:1.5px;background:#D4D4D4;opacity:0.4"></div>
<div class="a" style="left:1791px;top:197px;width:1px;height:1.5px;background:#9CDCFE;opacity:0.4"></div>
<div class="a" style="left:1792px;top:197px;width:1px;height:1.5px;background:#D4D4D4;opacity:0.4"></div>
<div class="a" style="left:1793px;top:197px;width:3px;height:1.5px;background:#9CDCFE;opacity:0.4"></div>
<div class="a" style="left:1796px;top:197px;width:1px;height:1.5px;background:#D4D4D4;opacity:0.4"></div>
<div class="a" style="left:1797px;top:197px;width:1px;height:1.5px;background:#D4D4D4;opacity:0.4"></div>
<div class="a" style="left:1798px;top:197px;width:1px;height:1.5px;background:#B5CEA8;opacity:0.4"></div>
<div class="a" style="left:1799px;top:197px;width:1px;height:1.5px;background:#D4D4D4;opacity:0.4"></div>
<div class="a" style="left:1791px;top:199px;width:3px;height:1.5px;background:#569CD6;opacity:0.4"></div>
<div class="a" style="left:1795px;top:199px;width:1px;height:1.5px;background:#9CDCFE;opacity:0.4"></div>
<div class="a" style="left:1796px;top:199px;width:1px;height:1.5px;background:#D4D4D4;opacity:0.4"></div>
<div class="a" style="left:1797px;top:199px;width:3px;height:1.5px;background:#9CDCFE;opacity:0.4"></div>
<div class="a" style="left:1800px;top:199px;width:1px;height:1.5px;background:#D4D4D4;opacity:0.4"></div>
<div class="a" style="left:1801px;top:199px;width:1px;height:1.5px;background:#9CDCFE;opacity:0.4"></div>
<div class="a" style="left:1802px;top:199px;width:1px;height:1.5px;background:#D4D4D4;opacity:0.4"></div>
<div class="a" style="left:1791px;top:203px;width:3px;height:1.5px;background:#C586C0;opacity:0.4"></div>
<div class="a" style="left:1794px;top:203px;width:1px;height:1.5px;background:#D4D4D4;opacity:0.4"></div>
<div class="a" style="left:1795px;top:203px;width:1px;height:1.5px;background:#9CDCFE;opacity:0.4"></div>
<div class="a" style="left:1796px;top:203px;width:1px;height:1.5px;background:#D4D4D4;opacity:0.4"></div>
<div class="a" style="left:1797px;top:203px;width:1px;height:1.5px;background:#B5CEA8;opacity:0.4"></div>
<div class="a" style="left:1798px;top:203px;width:1px;height:1.5px;background:#D4D4D4;opacity:0.4"></div>
<div class="a" style="left:1799px;top:203px;width:3px;height:1.5px;background:#9CDCFE;opacity:0.4"></div>
<div class="a" style="left:1802px;top:203px;width:1px;height:1.5px;background:#D4D4D4;opacity:0.4"></div>
<div class="a" style="left:1803px;top:203px;width:1px;height:1.5px;background:#9CDCFE;opacity:0.4"></div>
<div class="a" style="left:1804px;top:203px;width:1px;height:1.5px;background:#D4D4D4;opacity:0.4"></div>
<div class="a" style="left:1805px;top:203px;width:1px;height:1.5px;background:#D4D4D4;opacity:0.4"></div>
<div class="a" style="left:1806px;top:203px;width:1px;height:1.5px;background:#D4D4D4;opacity:0.4"></div>
<div class="a" style="left:1807px;top:203px;width:3px;height:1.5px;background:#CE9178;opacity:0.4"></div>
<div class="a" style="left:1810px;top:203px;width:1px;height:1.5px;background:#D4D4D4;opacity:0.4"></div>
<div class="a" style="left:1811px;top:203px;width:1px;height:1.5px;background:#9CDCFE;opacity:0.4"></div>
<div class="a" style="left:1812px;top:203px;width:1px;height:1.5px;background:#D4D4D4;opacity:0.4"></div>
<div class="a" style="left:1813px;top:203px;width:1px;height:1.5px;background:#D4D4D4;opacity:0.4"></div>
<div class="a" style="left:1814px;top:203px;width:1px;height:1.5px;background:#D4D4D4;opacity:0.4"></div>
<div class="a" style="left:1791px;top:205px;width:1px;height:1.5px;background:#D4D4D4;opacity:0.4"></div>
<div class="a" style="left:1795px;top:207px;width:1px;height:1.5px;background:#9CDCFE;opacity:0.4"></div>
<div class="a" style="left:1796px;top:207px;width:1px;height:1.5px;background:#D4D4D4;opacity:0.4"></div>
<div class="a" style="left:1797px;top:207px;width:3px;height:1.5px;background:#9CDCFE;opacity:0.4"></div>
<div class="a" style="left:1800px;top:207px;width:1px;height:1.5px;background:#D4D4D4;opacity:0.4"></div>
<div class="a" style="left:1801px;top:207px;width:1px;height:1.5px;background:#9CDCFE;opacity:0.4"></div>
<div class="a" style="left:1802px;top:207px;width:1px;height:1.5px;background:#D4D4D4;opacity:0.4"></div>
<div class="a" style="left:1803px;top:207px;width:1px;height:1.5px;background:#D4D4D4;opacity:0.4"></div>
<div class="a" style="left:1795px;top:211px;width:2px;height:1.5px;background:#C586C0;opacity:0.4"></div>
<div class="a" style="left:1797px;top:211px;width:1px;height:1.5px;background:#D4D4D4;opacity:0.4"></div>
<div class="a" style="left:1798px;top:211px;width:1px;height:1.5px;background:#9CDCFE;opacity:0.4"></div>
<div class="a" style="left:1799px;top:211px;width:1px;height:1.5px;background:#D4D4D4;opacity:0.4"></div>
<div class="a" style="left:1800px;top:211px;width:1px;height:1.5px;background:#D4D4D4;opacity:0.4"></div>
<div class="a" style="left:1801px;top:211px;width:3px;height:1.5px;background:#CE9178;opacity:0.4"></div>
<div class="a" style="left:1804px;top:211px;width:1px;height:1.5px;background:#D4D4D4;opacity:0.4"></div>
<div class="a" style="left:1795px;top:213px;width:4px;height:1.5px;background:#DCDCAA;opacity:0.4"></div>
<div class="a" style="left:1799px;top:213px;width:1px;height:1.5px;background:#D4D4D4;opacity:0.4"></div>
<div class="a" style="left:1800px;top:213px;width:1px;height:1.5px;background:#D4D4D4;opacity:0.4"></div>
<div class="a" style="left:1801px;top:213px;width:1px;height:1.5px;background:#9CDCFE;opacity:0.4"></div>
<div class="a" style="left:1802px;top:213px;width:1px;height:1.5px;background:#D4D4D4;opacity:0.4"></div>
<div class="a" style="left:1803px;top:213px;width:1px;height:1.5px;background:#9CDCFE;opacity:0.4"></div>
<div class="a" style="left:1804px;top:213px;width:1px;height:1.5px;background:#D4D4D4;opacity:0.4"></div>
<div class="a" style="left:1805px;top:213px;width:1px;height:1.5px;background:#D4D4D4;opacity:0.4"></div>
<div class="a" style="left:1795px;top:217px;width:4px;height:1.5px;background:#C586C0;opacity:0.4"></div>
<div class="a" style="left:1800px;top:217px;width:2px;height:1.5px;background:#C586C0;opacity:0.4"></div>
<div class="a" style="left:1802px;top:217px;width:1px;height:1.5px;background:#D4D4D4;opacity:0.4"></div>
<div class="a" style="left:1803px;top:217px;width:1px;height:1.5px;background:#9CDCFE;opacity:0.4"></div>
<div class="a" style="left:1804px;top:217px;width:1px;height:1.5px;background:#D4D4D4;opacity:0.4"></div>
<div class="a" style="left:1805px;top:217px;width:1px;height:1.5px;background:#D4D4D4;opacity:0.4"></div>
<div class="a" style="left:1806px;top:217px;width:3px;height:1.5px;background:#CE9178;opacity:0.4"></div>
<div class="a" style="left:1809px;top:217px;width:1px;height:1.5px;background:#D4D4D4;opacity:0.4"></div>
<div class="a" style="left:1795px;top:219px;width:1px;height:1.5px;background:#D4D4D4;opacity:0.4"></div>
<div class="a" style="left:1799px;top:221px;width:2px;height:1.5px;background:#C586C0;opacity:0.4"></div>
<div class="a" style="left:1801px;top:221px;width:1px;height:1.5px;background:#D4D4D4;opacity:0.4"></div>
<div class="a" style="left:1802px;top:221px;width:7px;height:1.5px;background:#DCDCAA;opacity:0.4"></div>
<div class="a" style="left:1809px;top:221px;width:1px;height:1.5px;background:#D4D4D4;opacity:0.4"></div>
<div class="a" style="left:1810px;top:221px;width:1px;height:1.5px;background:#D4D4D4;opacity:0.4"></div>
<div class="a" style="left:1811px;top:221px;width:1px;height:1.5px;background:#9CDCFE;opacity:0.4"></div>
<div class="a" style="left:1812px;top:221px;width:1px;height:1.5px;background:#D4D4D4;opacity:0.4"></div>
<div class="a" style="left:1813px;top:221px;width:1px;height:1.5px;background:#D4D4D4;opacity:0.4"></div>
<div class="a" style="left:1799px;top:223px;width:6px;height:1.5px;background:#C586C0;opacity:0.4"></div>
<div class="a" style="left:1806px;top:223px;width:1px;height:1.5px;background:#B5CEA8;opacity:0.4"></div>
<div class="a" style="left:1807px;top:223px;width:1px;height:1.5px;background:#D4D4D4;opacity:0.4"></div>
<div class="a" style="left:1795px;top:227px;width:4px;height:1.5px;background:#C586C0;opacity:0.4"></div>
<div class="a" style="left:1795px;top:229px;width:1px;height:1.5px;background:#D4D4D4;opacity:0.4"></div>
<div class="a" style="left:1803px;top:231px;width:3px;height:1.5px;background:#9CDCFE;opacity:0.4"></div>
<div class="a" style="left:1806px;top:231px;width:1px;height:1.5px;background:#D4D4D4;opacity:0.4"></div>
<div class="a" style="left:1807px;top:231px;width:3px;height:1.5px;background:#DCDCAA;opacity:0.4"></div>
<div class="a" style="left:1810px;top:231px;width:1px;height:1.5px;background:#D4D4D4;opacity:0.4"></div>
<div class="a" style="left:1811px;top:231px;width:1px;height:1.5px;background:#D4D4D4;opacity:0.4"></div>
<div class="a" style="left:1812px;top:231px;width:1px;height:1.5px;background:#9CDCFE;opacity:0.4"></div>
<div class="a" style="left:1813px;top:231px;width:1px;height:1.5px;background:#D4D4D4;opacity:0.4"></div>
<div class="a" style="left:1814px;top:231px;width:1px;height:1.5px;background:#D4D4D4;opacity:0.4"></div>
<div class="a" style="left:1799px;top:233px;width:1px;height:1.5px;background:#D4D4D4;opacity:0.4"></div>
<div class="a" style="left:1795px;top:237px;width:1px;height:1.5px;background:#D4D4D4;opacity:0.4"></div>
<div class="a" style="left:1791px;top:239px;width:1px;height:1.5px;background:#D4D4D4;opacity:0.4"></div>
<div class="a" style="left:1791px;top:241px;width:2px;height:1.5px;background:#C586C0;opacity:0.4"></div>
<div class="a" style="left:1793px;top:241px;width:1px;height:1.5px;background:#D4D4D4;opacity:0.4"></div>
<div class="a" style="left:1794px;top:241px;width:7px;height:1.5px;background:#DCDCAA;opacity:0.4"></div>
<div class="a" style="left:1801px;top:241px;width:1px;height:1.5px;background:#D4D4D4;opacity:0.4"></div>
<div class="a" style="left:1802px;top:241px;width:1px;height:1.5px;background:#D4D4D4;opacity:0.4"></div>
<div class="a" style="left:1803px;top:241px;width:1px;height:1.5px;background:#9CDCFE;opacity:0.4"></div>
<div class="a" style="left:1804px;top:241px;width:1px;height:1.5px;background:#D4D4D4;opacity:0.4"></div>
<div class="a" style="left:1805px;top:241px;width:1px;height:1.5px;background:#D4D4D4;opacity:0.4"></div>
<div class="a" style="left:1791px;top:243px;width:6px;height:1.5px;background:#C586C0;opacity:0.4"></div>
<div class="a" style="left:1798px;top:243px;width:1px;height:1.5px;background:#B5CEA8;opacity:0.4"></div>
<div class="a" style="left:1799px;top:243px;width:1px;height:1.5px;background:#D4D4D4;opacity:0.4"></div>
<div class="a" style="left:1791px;top:245px;width:4px;height:1.5px;background:#C586C0;opacity:0.4"></div>
<div class="a" style="left:1791px;top:247px;width:6px;height:1.5px;background:#C586C0;opacity:0.4"></div>
<div class="a" style="left:1798px;top:247px;width:1px;height:1.5px;background:#B5CEA8;opacity:0.4"></div>
<div class="a" style="left:1799px;top:247px;width:1px;height:1.5px;background:#D4D4D4;opacity:0.4"></div>
<div class="a" style="left:1787px;top:249px;width:1px;height:1.5px;background:#D4D4D4;opacity:0.4"></div>
<div class="a" style="left:1787px;top:251px;width:3px;height:1.5px;background:#569CD6;opacity:0.4"></div>
<div class="a" style="left:1791px;top:251px;width:4px;height:1.5px;background:#DCDCAA;opacity:0.4"></div>
<div class="a" style="left:1795px;top:251px;width:1px;height:1.5px;background:#D4D4D4;opacity:0.4"></div>
<div class="a" style="left:1796px;top:251px;width:1px;height:1.5px;background:#D4D4D4;opacity:0.4"></div>
<div class="a" style="left:1787px;top:253px;width:1px;height:1.5px;background:#D4D4D4;opacity:0.4"></div>
<div class="a" style="left:1791px;top:255px;width:4px;height:1.5px;background:#569CD6;opacity:0.4"></div>
<div class="a" style="left:1796px;top:255px;width:3px;height:1.5px;background:#9CDCFE;opacity:0.4"></div>
<div class="a" style="left:1799px;top:255px;width:1px;height:1.5px;background:#D4D4D4;opacity:0.4"></div>
<div class="a" style="left:1800px;top:255px;width:3px;height:1.5px;background:#4FC1FF;opacity:0.4"></div>
<div class="a" style="left:1803px;top:255px;width:1px;height:1.5px;background:#D4D4D4;opacity:0.4"></div>
<div class="a" style="left:1804px;top:255px;width:1px;height:1.5px;background:#D4D4D4;opacity:0.4"></div>
<div class="a" style="left:1791px;top:257px;width:6px;height:1.5px;background:#DCDCAA;opacity:0.4"></div>
<div class="a" style="left:1797px;top:257px;width:1px;height:1.5px;background:#D4D4D4;opacity:0.4"></div>
<div class="a" style="left:1798px;top:257px;width:6px;height:1.5px;background:#CE9178;opacity:0.4"></div>
<div class="a" style="left:1805px;top:257px;width:3px;height:1.5px;background:#CE9178;opacity:0.4"></div>
<div class="a" style="left:1809px;top:257px;width:11px;height:1.5px;background:#CE9178;opacity:0.4"></div>
<div class="a" style="left:1820px;top:257px;width:1px;height:1.5px;background:#D4D4D4;opacity:0.4"></div>
<div class="a" style="left:1821px;top:257px;width:1px;height:1.5px;background:#D4D4D4;opacity:0.4"></div>
<div class="a" style="left:1791px;top:259px;width:4px;height:1.5px;background:#DCDCAA;opacity:0.4"></div>
<div class="a" style="left:1795px;top:259px;width:1px;height:1.5px;background:#D4D4D4;opacity:0.4"></div>
<div class="a" style="left:1796px;top:259px;width:3px;height:1.5px;background:#9CDCFE;opacity:0.4"></div>
<div class="a" style="left:1799px;top:259px;width:1px;height:1.5px;background:#D4D4D4;opacity:0.4"></div>
<div class="a" style="left:1800px;top:259px;width:1px;height:1.5px;background:#D4D4D4;opacity:0.4"></div>
<div class="a" style="left:1791px;top:261px;width:2px;height:1.5px;background:#C586C0;opacity:0.4"></div>
<div class="a" style="left:1793px;top:261px;width:1px;height:1.5px;background:#D4D4D4;opacity:0.4"></div>
<div class="a" style="left:1794px;top:261px;width:9px;height:1.5px;background:#DCDCAA;opacity:0.4"></div>
<div class="a" style="left:1803px;top:261px;width:1px;height:1.5px;background:#D4D4D4;opacity:0.4"></div>
<div class="a" style="left:1804px;top:261px;width:3px;height:1.5px;background:#9CDCFE;opacity:0.4"></div>
<div class="a" style="left:1807px;top:261px;width:1px;height:1.5px;background:#D4D4D4;opacity:0.4"></div>
<div class="a" style="left:1808px;top:261px;width:1px;height:1.5px;background:#D4D4D4;opacity:0.4"></div>
<div class="a" style="left:1791px;top:263px;width:6px;height:1.5px;background:#DCDCAA;opacity:0.4"></div>
<div class="a" style="left:1797px;top:263px;width:1px;height:1.5px;background:#D4D4D4;opacity:0.4"></div>
<div class="a" style="left:1798px;top:263px;width:12px;height:1.5px;background:#CE9178;opacity:0.4"></div>
<div class="a" style="left:1811px;top:263px;width:2px;height:1.5px;background:#CE9178;opacity:0.4"></div>
<div class="a" style="left:1814px;top:263px;width:8px;height:1.5px;background:#CE9178;opacity:0.4"></div>
<div class="a" style="left:1822px;top:263px;width:1px;height:1.5px;background:#D4D4D4;opacity:0.4"></div>
<div class="a" style="left:1823px;top:263px;width:1px;height:1.5px;background:#D4D4D4;opacity:0.4"></div>
<div class="a" style="left:1791px;top:265px;width:4px;height:1.5px;background:#C586C0;opacity:0.4"></div>
<div class="a" style="left:1791px;top:267px;width:6px;height:1.5px;background:#DCDCAA;opacity:0.4"></div>
<div class="a" style="left:1797px;top:267px;width:1px;height:1.5px;background:#D4D4D4;opacity:0.4"></div>
<div class="a" style="left:1798px;top:267px;width:12px;height:1.5px;background:#CE9178;opacity:0.4"></div>
<div class="a" style="left:1811px;top:267px;width:2px;height:1.5px;background:#CE9178;opacity:0.4"></div>
<div class="a" style="left:1814px;top:267px;width:3px;height:1.5px;background:#CE9178;opacity:0.4"></div>
<div class="a" style="left:1818px;top:267px;width:8px;height:1.5px;background:#CE9178;opacity:0.4"></div>
<div class="a" style="left:1826px;top:267px;width:1px;height:1.5px;background:#D4D4D4;opacity:0.4"></div>
<div class="a" style="left:1827px;top:267px;width:1px;height:1.5px;background:#D4D4D4;opacity:0.4"></div>
<div class="a" style="left:1791px;top:269px;width:6px;height:1.5px;background:#C586C0;opacity:0.4"></div>
<div class="a" style="left:1798px;top:269px;width:1px;height:1.5px;background:#B5CEA8;opacity:0.4"></div>
<div class="a" style="left:1799px;top:269px;width:1px;height:1.5px;background:#D4D4D4;opacity:0.4"></div>
<div class="a" style="left:1787px;top:271px;width:1px;height:1.5px;background:#D4D4D4;opacity:0.4"></div>
<div class="a" style="left:1899px;top:131px;width:1px;height:373px;background:#3c3c3c;"></div>
<div class="a" style="left:1899px;top:131px;width:21px;height:1px;background:#3a3a3a;"></div>
<div class="a" style="left:1900px;top:354px;width:20px;height:3px;background:#6e6e6e;"></div>
<div class="a" style="left:327px;top:504px;width:1593px;height:483px;background:#1e1e1e;"></div>
<div class="a" style="left:327px;top:504px;width:1593px;height:1.5px;background:#414141;"></div>
<div class="t" style="left:357.50px;top:525.03px;font-size:16.5px;color:#969696;font-family:'Liberation Sans',sans-serif;letter-spacing:0.000px;transform:scaleX(0.8641);transform-origin:0 0;">PROBLEMS</div>
<div class="t" style="left:474.00px;top:525.03px;font-size:16.5px;color:#969696;font-family:'Liberation Sans',sans-serif;letter-spacing:0.000px;transform:scaleX(0.9044);transform-origin:0 0;">OUTPUT</div>
<div class="t" style="left:571.40px;top:525.03px;font-size:16.5px;color:#969696;font-family:'Liberation Sans',sans-serif;letter-spacing:0.000px;transform:scaleX(0.8903);transform-origin:0 0;">DEBUG CONSOLE</div>
<div class="t" style="left:736.00px;top:525.03px;font-size:16.5px;color:#e7e7e7;font-family:'Liberation Sans',sans-serif;letter-spacing:0.000px;transform:scaleX(0.9217);transform-origin:0 0;">TERMINAL</div>
<div class="a" style="left:733px;top:550.5px;width:82px;height:1.5px;background:#e7e7e7;"></div>
<svg style="left:1788px;top:520px;" width="23" height="23" viewBox="0 0 23 23"><path d="M11.5 1v21M1 11.5h21" stroke="#c5c5c5" stroke-width="1.7"/></svg>
<svg style="left:1817px;top:527px;" width="14" height="10" viewBox="0 0 14 10"><path d="M1 2l6 6 6-6" fill="none" stroke="#c5c5c5" stroke-width="1.5"/></svg>
<svg style="left:1850px;top:524px;" width="18" height="13" viewBox="0 0 18 13"><path d="M1 11L9 2.5 17 11" fill="none" stroke="#c5c5c5" stroke-width="1.7"/></svg>
<svg style="left:1884px;top:524px;" width="15" height="15" viewBox="0 0 15 15"><path d="M1 1L14 14M14 1L1 14" stroke="#c5c5c5" stroke-width="1.7"/></svg>
<div class="t" style="left:357px;top:581.04px;font-family:'Liberation Mono',monospace;font-size:19px;letter-spacing:-0.37px;color:#cccccc;-webkit-text-stroke:0.25px #cccccc">Microsoft Windows [Version 10.0.19044.2251]</div>
<div class="t" style="left:357px;top:605.04px;font-family:'Liberation Mono',monospace;font-size:19px;letter-spacing:-0.37px;color:#cccccc;-webkit-text-stroke:0.25px #cccccc">(c) Microsoft Corporation. All rights reserved.</div>
<div class="t" style="left:357px;top:653.04px;font-family:'Liberation Mono',monospace;font-size:19px;letter-spacing:-0.37px;color:#cccccc;-webkit-text-stroke:0.25px #cccccc">C:\Users\User\Downloads\DSA&gt;gcc paranthesis.c</div>
<div class="t" style="left:357px;top:701.04px;font-family:'Liberation Mono',monospace;font-size:19px;letter-spacing:-0.37px;color:#cccccc;-webkit-text-stroke:0.25px #cccccc">C:\Users\User\Downloads\DSA&gt;a.exe</div>
<div class="t" style="left:357px;top:725.04px;font-family:'Liberation Mono',monospace;font-size:19px;letter-spacing:-0.37px;color:#cccccc;-webkit-text-stroke:0.25px #cccccc">ENTER THE EXPRESSION  ((25+)))</div>
<div class="t" style="left:357px;top:749.04px;font-family:'Liberation Mono',monospace;font-size:19px;letter-spacing:-0.37px;color:#cccccc;-webkit-text-stroke:0.25px #cccccc">PARANTHESIS IS NOT CORRECT</div>
<div class="t" style="left:357px;top:773.04px;font-family:'Liberation Mono',monospace;font-size:19px;letter-spacing:-0.37px;color:#cccccc;-webkit-text-stroke:0.25px #cccccc">C:\Users\User\Downloads\DSA&gt;gcc paranthesis.c</div>
<div class="t" style="left:357px;top:821.04px;font-family:'Liberation Mono',monospace;font-size:19px;letter-spacing:-0.37px;color:#cccccc;-webkit-text-stroke:0.25px #cccccc">C:\Users\User\Downloads\DSA&gt;a.exe</div>
<div class="t" style="left:357px;top:845.04px;font-family:'Liberation Mono',monospace;font-size:19px;letter-spacing:-0.37px;color:#cccccc;-webkit-text-stroke:0.25px #cccccc">ENTER THE EXPRESSION((25+))</div>
<div class="t" style="left:357px;top:869.04px;font-family:'Liberation Mono',monospace;font-size:19px;letter-spacing:-0.37px;color:#cccccc;-webkit-text-stroke:0.25px #cccccc">PARANTHESIS IS CORRECT</div>
<div class="t" style="left:357px;top:893.04px;font-family:'Liberation Mono',monospace;font-size:19px;letter-spacing:-0.37px;color:#cccccc;-webkit-text-stroke:0.25px #cccccc">C:\Users\User\Downloads\DSA&gt;a.exe</div>
<div class="a" style="left:721px;top:888px;width:11px;height:24px;background:#cccccc;"></div>
<div class="a" style="left:1740.5px;top:557px;width:1.5px;height:430px;background:#414141;"></div>
<div class="a" style="left:1742px;top:590px;width:178px;height:33px;background:#37373d;"></div>
<svg style="left:1757px;top:563px;" width="23" height="23" viewBox="0 0 23 23"><rect x="1" y="1" width="21" height="21" rx="2" fill="none" stroke="#c5c5c5" stroke-width="1.5"/><path d="M9 6.5l5 5-5 5" fill="none" stroke="#c5c5c5" stroke-width="1.5"/></svg>
<div class="t" style="left:1787.00px;top:565.49px;font-size:19.5px;color:#cccccc;font-family:'Liberation Sans',sans-serif;letter-spacing:-0.222px;">powershell</div>
<svg style="left:1757px;top:596px;" width="24" height="22" viewBox="0 0 24 22"><rect x="1" y="1" width="22" height="20" rx="1" fill="none" stroke="#c5c5c5" stroke-width="1.5"/><line x1="1" y1="5.5" x2="23" y2="5.5" stroke="#c5c5c5" stroke-width="1.3"/></svg>
<div class="t" style="left:1761px;top:605px;font-size:10px;color:#c5c5c5;letter-spacing:-0.5px">C:\</div>
<div class="t" style="left:1787.00px;top:598.49px;font-size:19.5px;color:#cccccc;font-family:'Liberation Sans',sans-serif;letter-spacing:0.000px;">cmd</div>
<div class="a" style="left:0px;top:987px;width:1920px;height:33px;background:#007acc;"></div>
<svg style="left:23px;top:993px;" width="20" height="20" viewBox="0 0 20 20"><circle cx="10" cy="10" r="8.2" fill="none" stroke="#fff" stroke-width="1.6"/><path d="M6.5 6.5l7 7M13.5 6.5l-7 7" stroke="#fff" stroke-width="1.6"/></svg>
<div class="t" style="left:49px;top:993px;font-size:19px;color:#fff;font-family:'Liberation Serif',serif">0</div>
<svg style="left:63px;top:993px;" width="21" height="20" viewBox="0 0 21 20"><path d="M10.5 1.5L19.5 18.5H1.5z" fill="none" stroke="#fff" stroke-width="1.6" stroke-linejoin="round"/><path d="M10.5 7v6M10.5 14.5v2" stroke="#fff" stroke-width="1.7"/></svg>
<div class="t" style="left:89.5px;top:993px;font-size:19px;color:#fff;font-family:'Liberation Serif',serif">0</div>
<div class="t" style="left:1364.00px;top:995.26px;font-size:18px;color:#ffffff;font-family:'Liberation Sans',sans-serif;letter-spacing:-0.458px;">Ln 51, Col 29</div>
<div class="t" style="left:1489.80px;top:995.26px;font-size:18px;color:#ffffff;font-family:'Liberation Sans',sans-serif;letter-spacing:0.000px;transform:scaleX(0.9150);transform-origin:0 0;">Spaces: 4</div>
<div class="t" style="left:1587.30px;top:995.26px;font-size:18px;color:#ffffff;font-family:'Liberation Sans',sans-serif;letter-spacing:0.000px;transform:scaleX(0.9157);transform-origin:0 0;">UTF-8</div>
<div class="t" style="left:1658.00px;top:995.26px;font-size:18px;color:#ffffff;font-family:'Liberation Sans',sans-serif;letter-spacing:0.000px;transform:scaleX(0.8298);transform-origin:0 0;">CRLF</div>
<div class="t" style="left:1721.00px;top:995.26px;font-size:18px;color:#ffffff;font-family:'Liberation Sans',sans-serif;letter-spacing:0.000px;">C</div>
<div class="t" style="left:1756.80px;top:995.26px;font-size:18px;color:#ffffff;font-family:'Liberation Sans',sans-serif;letter-spacing:-0.275px;">Win32</div>
<svg style="left:1830px;top:993px;" width="24" height="22" viewBox="0 0 24 22"><path d="M8 4.5V1.2H21.5V10.2H16.5L13.8 12.8" fill="none" stroke="#fff" stroke-width="1.5"/><circle cx="8.8" cy="9.5" r="3.6" fill="none" stroke="#fff" stroke-width="1.5"/><path d="M2.5 19.5A6.3 6.3 0 0 1 15 19.5" fill="none" stroke="#fff" stroke-width="1.5"/></svg>
<svg style="left:1878px;top:993px;" width="20" height="22" viewBox="0 0 20 22"><path d="M9.5 1.5C6 1.5 3.8 4.3 3.8 8V14L1.5 17.5H17.5L15.2 14V8C15.2 4.3 13 1.5 9.5 1.5z" fill="none" stroke="#fff" stroke-width="1.5" stroke-linejoin="round"/><path d="M7.5 17.8a2 2 0 0 0 4 0" fill="none" stroke="#fff" stroke-width="1.5"/></svg>
<div class="a" style="left:0px;top:1020px;width:1920px;height:60px;background:#e8ddd3;"></div>
<svg style="left:24px;top:1037px;" width="25" height="25" viewBox="0 0 25 25"><path d="M0 3.5L10 2.1V12H0z M11.3 1.9L24.5 0V12H11.3z M0 13.2H10v10L0 21.7z M11.3 13.2H24.5V25L11.3 23.2z" fill="#000"/></svg>
<div class="a" style="left:72px;top:1020px;width:515px;height:60px;background:#ffffff;border:2px solid #cbcbcb"></div>
<svg style="left:89px;top:1037px;" width="26" height="26" viewBox="0 0 26 26"><circle cx="16" cy="9.5" r="8" fill="none" stroke="#111" stroke-width="1.8"/><line x1="10.5" y1="15.5" x2="1.5" y2="24.5" stroke="#111" stroke-width="2"/></svg>
<div class="t" style="left:132.50px;top:1042.17px;font-size:22px;color:#1f1f1f;font-family:'Liberation Sans',sans-serif;letter-spacing:0.125px;">Type here to search</div>
<svg style="left:611px;top:1037px;" width="26" height="26" viewBox="0 0 26 26"><circle cx="13" cy="13" r="10" fill="none" stroke="#000" stroke-width="3"/></svg>
<svg style="left:683px;top:1037px;" width="27" height="26" viewBox="0 0 27 26"><path d="M1.1 1V4.3H16.9V1M1.1 24.5V21.2H16.9V24.5M23.3 1V24.5" fill="none" stroke="#111" stroke-width="1.4"/><rect x="1.1" y="7.4" width="15.8" height="10" fill="none" stroke="#111" stroke-width="1.4"/><rect x="22" y="8.2" width="2.6" height="2.6" fill="#111"/></svg>
<svg style="left:756px;top:1036px;" width="34" height="28" viewBox="0 0 34 28"><path d="M1 3a2 2 0 0 1 2-2H14L16.5 4V9H1z" fill="#e2a60c"/><path d="M1 5.6H30.5a2 2 0 0 1 2 2V24a2 2 0 0 1-2 2H3a2 2 0 0 1-2-2z" fill="#fbd35f"/><path d="M6 27.5V17.5a2 2 0 0 1 2-2H25.3a2 2 0 0 1 2 2V27.5H22V19.8H11.5V27.5z" fill="#2d8fdf"/></svg>
<div class="a" style="left:812px;top:1020px;width:73px;height:60px;background:#f3efeb;"></div>
<div class="a" style="left:812px;top:1077px;width:73px;height:3px;background:#0078d7;"></div>
<svg style="left:830px;top:1031px;" width="37" height="37" viewBox="0 0 100 100"><path fill="#2176b8" d="M96.46 10.8L75.86.88C73.47-.27 70.62.21 68.75 2.08L1.3 63.58c-1.82 1.66-1.81 4.51.01 6.17l5.5 5.01c1.49 1.35 3.72 1.45 5.32.24L93.36 13.37C96.09 11.3 100 13.25 100 16.67v-.24c0-2.4-1.38-4.59-3.54-5.63z"/>
<path fill="#1a88d8" d="M96.46 89.2l-20.6 9.92c-2.39 1.15-5.24.67-7.11-1.2L1.3 36.42c-1.82-1.66-1.81-4.51.01-6.17l5.5-5.01c1.49-1.35 3.72-1.45 5.32-.24l81.23 61.62c2.73 2.07 6.64.12 6.64-3.3v.24c0 2.4-1.38 4.59-3.54 5.63z"/>
<path fill="#36a9f2" d="M75.86 99.13c-2.39 1.15-5.24.66-7.11-1.21 2.31 2.31 6.25.67 6.25-2.59V4.67c0-3.26-3.94-4.9-6.25-2.59 1.87-1.87 4.72-2.36 7.11-1.21l20.6 9.91c2.16 1.04 3.54 3.23 3.54 5.63v67.17c0 2.4-1.38 4.59-3.54 5.63l-20.6 9.92z"/></svg>
<div class="a" style="left:893px;top:1077px;width:61px;height:3px;background:#0078d7;"></div>
<svg style="left:908px;top:1035px;" width="29" height="29" viewBox="0 0 29 29"><path d="M24.59 16.02 L27.69 17.39 L25.87 21.78 L22.70 20.56 L20.56 22.70 L21.78 25.87 L17.39 27.69 L16.02 24.59 L12.98 24.59 L11.61 27.69 L7.22 25.87 L8.44 22.70 L6.30 20.56 L3.13 21.78 L1.31 17.39 L4.41 16.02 L4.41 12.98 L1.31 11.61 L3.13 7.22 L6.30 8.44 L8.44 6.30 L7.22 3.13 L11.61 1.31 L12.98 4.41 L16.02 4.41 L17.39 1.31 L21.78 3.13 L20.56 6.30 L22.70 8.44 L25.87 7.22 L27.69 11.61 L24.59 12.98Z M20.9 14.5A6.4 6.4 0 1 0 8.1 14.5A6.4 6.4 0 1 0 20.9 14.5Z" fill="#3d3b39" fill-rule="evenodd" stroke="#3d3b39" stroke-width="0.8" stroke-linejoin="round"/></svg>
<div class="a" style="left:968px;top:1077px;width:61px;height:3px;background:#0078d7;"></div>
<svg style="left:980px;top:1032px;" width="37" height="37" viewBox="0 0 37 37"><circle cx="18.5" cy="18.5" r="18" fill="#db4437"/><path d="M18.5 18.5L34.1 9.5A18 18 0 0 1 20 36.4z" fill="#fcc934"/><path d="M18.5 18.5L20 36.4A18 18 0 0 1 2.9 9.5z" fill="#0f9d58"/><path d="M2.9 9.5A18 18 0 0 1 34.1 9.5L18.5 9.5z" fill="#db4437"/><circle cx="18.5" cy="18.5" r="8.3" fill="#fff"/><circle cx="18.5" cy="18.5" r="6.5" fill="#4285f4"/></svg>
<svg style="left:1230px;top:1028px;" width="48" height="40" viewBox="0 0 48 40"><defs><linearGradient id="sung" x1="0.2" y1="0" x2="0.8" y2="1"><stop offset="0" stop-color="#ffd200"/><stop offset="1" stop-color="#e85d00"/></linearGradient></defs><circle cx="23.8" cy="18.9" r="15.5" fill="url(#sung)"/><path d="M12.6 9.8H18.8M23.2 9.8H33.3M12.6 16H41M6.4 22H24.5M29.2 22H35.4M6.4 28H35.4" stroke="#efe4c4" stroke-width="2.4" stroke-linecap="round"/><circle cx="37.5" cy="8.2" r="4.6" fill="#c42b1c" stroke="#e8ddd3" stroke-width="1.2"/></svg>
<div class="t" style="left:1284.40px;top:1042.17px;font-size:22px;color:#111111;font-family:'Liberation Sans',sans-serif;letter-spacing:0.000px;transform:scaleX(0.9085);transform-origin:0 0;">31°C  Smoke</div>
<svg style="left:1428px;top:1043px;" width="20" height="12" viewBox="0 0 20 12"><path d="M1 11L10 2l9 9" fill="none" stroke="#111" stroke-width="1.6"/></svg>
<svg style="left:1465px;top:1038px;" width="21" height="24" viewBox="0 0 21 24"><rect x="1" y="7" width="13" height="11" rx="2.5" fill="none" stroke="#222" stroke-width="1.4"/><path d="M14 10l5-3v11l-5-3" fill="none" stroke="#222" stroke-width="1.4"/><path d="M4 3.5a8 4 0 0 1 8 0M4 21a8 4 0 0 0 8 0" fill="none" stroke="#222" stroke-width="1.2"/></svg>
<svg style="left:1497px;top:1041px;" width="27" height="17" viewBox="0 0 27 17"><path d="M6 16a5 5 0 0 1-1-9.9A7 7 0 0 1 18 4.5a5.5 5.5 0 0 1 7 5.5A4 4 0 0 1 22 16z" fill="#0a6fd1"/><path d="M9 16a4 4 0 0 1 0-8 6.5 6.5 0 0 1 12.5 1.5A3.3 3.3 0 0 1 24 16z" fill="#2a9af0"/></svg>
<svg style="left:1533px;top:1037px;" width="26" height="27" viewBox="0 0 26 27"><path d="M2 5l20-4v16L2 21z" fill="none" stroke="#222" stroke-width="1.4"/><path d="M8 9a4 4 0 0 1 7 0M15 13a4 4 0 0 1-7 0" fill="none" stroke="#222" stroke-width="1.3"/><circle cx="20" cy="21" r="5.5" fill="#f7830f"/></svg>
<svg style="left:1568px;top:1041px;" width="27" height="18" viewBox="0 0 27 18"><rect x="6" y="5" width="19" height="11" fill="none" stroke="#222" stroke-width="1.4"/><rect x="8" y="7" width="7" height="7" fill="#222"/><rect x="25" y="8" width="2" height="5" fill="#222"/><path d="M1 1v4M4 1v4M0 5h5v3l-2.5 2v6" fill="none" stroke="#222" stroke-width="1.3"/></svg>
<svg style="left:1608px;top:1039px;" width="23" height="21" viewBox="0 0 23 21"><path d="M1.5 13a16 16 0 0 1 20-9M5 16a11 11 0 0 1 13.5-6M8.5 19a6 6 0 0 1 7-3" fill="none" stroke="#222" stroke-width="1.5"/><circle cx="15" cy="19.5" r="1.6" fill="#222"/></svg>
<svg style="left:1642px;top:1038px;" width="25" height="24" viewBox="0 0 25 24"><path d="M1.5 8.5h5l6-6v19l-6-6h-5z" fill="none" stroke="#222" stroke-width="1.4" stroke-linejoin="round"/><path d="M15.5 8.5a4 4 0 0 1 0 7M18.5 5.5a8 8 0 0 1 0 13M21.5 2.5a12 12 0 0 1 0 19" fill="none" stroke="#222" stroke-width="1.4"/></svg>
<div class="t" style="left:1682.60px;top:1041.91px;font-size:19px;color:#111111;font-family:'Liberation Sans',sans-serif;letter-spacing:0.000px;transform:scaleX(0.8049);transform-origin:0 0;">ENG</div>
<div class="t" style="left:1761.00px;top:1026.91px;font-size:19px;color:#111111;font-family:'Liberation Sans',sans-serif;letter-spacing:0.000px;transform:scaleX(0.9042);transform-origin:0 0;">03:56</div>
<div class="t" style="left:1736.00px;top:1054.91px;font-size:19px;color:#111111;font-family:'Liberation Sans',sans-serif;letter-spacing:-0.444px;">27-12-2022</div>
<svg style="left:1850px;top:1030px;" width="50" height="50" viewBox="0 0 50 50"><path d="M7.9 7.8H32V27H20L17.5 30.5 13.5 27H7.9z" fill="#000"/><path d="M13 13.4H27M13 17.4H27M13 21.5H27" stroke="#e8ddd3" stroke-width="1.4"/><circle cx="31" cy="31.5" r="13.5" fill="rgba(209,209,209,0.66)" stroke="#6e6e6e" stroke-width="1.1"/></svg>
<div class="t" style="left:1873.00px;top:1052.34px;font-size:18.5px;color:#000000;font-family:'Liberation Sans',sans-serif;letter-spacing:0.000px;transform:scaleX(0.7619);transform-origin:0 0;">18</div>
<div class="a" style="left:1911px;top:1020px;width:1px;height:60px;background:#9f9a95;"></div>
</body></html>
